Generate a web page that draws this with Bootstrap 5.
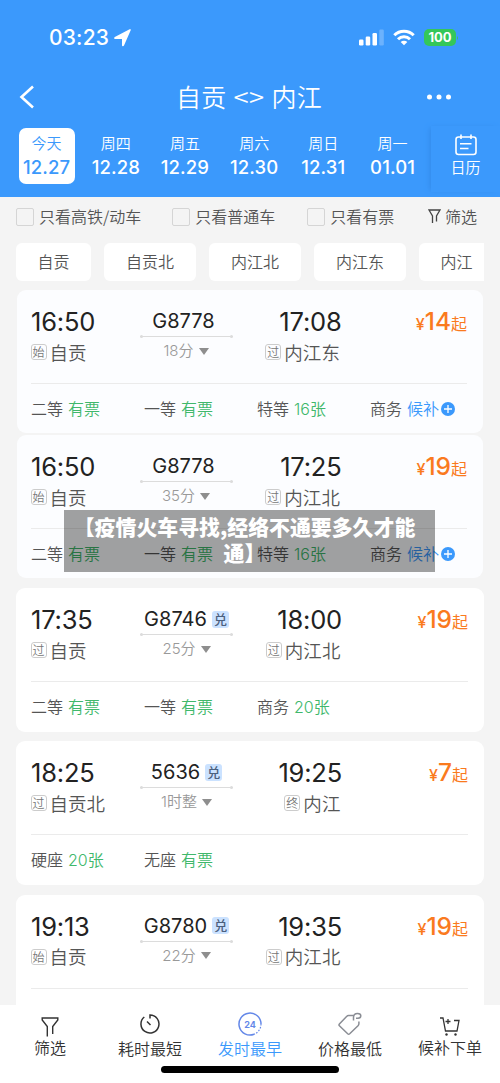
<!DOCTYPE html>
<html lang="zh-CN">
<head>
<meta charset="utf-8">
<meta name="viewport" content="width=device-width, initial-scale=1">
<title>自贡 - 内江</title>
<link href="https://cdn.jsdelivr.net/npm/bootstrap@5.3.0/dist/css/bootstrap.min.css" rel="stylesheet">
<style>
body{font-family:Inter,"Noto Sans CJK SC",sans-serif;background:#f4f4f4;color:#333;font-size:16px;line-height:1}
.zh{font-family:"Noto Sans CJK SC",sans-serif;font-weight:350}
.screen{width:500px;height:1083px}
.top-area{background:#3b99fc;height:197px}
.status{height:75px;padding:0 41px 0 49px}
.clock{font-size:21px;font-weight:500;letter-spacing:.2px}
.battery{background:#34c759;border-radius:5px;width:32px;height:17px;font-size:13px;font-weight:700;line-height:17px}
.title-row{height:44px;padding:0 48px 0 19px}
.title-text{font-size:25px;font-weight:350;letter-spacing:.3px;word-spacing:1.5px;line-height:32px;margin:-3px 0 0 37px}
.title-text b{font-weight:350;display:inline-block;transform:scaleX(1.1);margin:0 1px}
.dates{height:78px;padding:9px 0 0 12px}
.day{width:69.3px;height:56px}
.day-in{width:56px;height:56px;border-radius:7px;padding-top:6px}
.day-in.on{background:#fff;color:#3b99fc}
.day-name{font-size:15px;line-height:18px}
.day-num{font-size:18.5px;line-height:30px;font-weight:500;letter-spacing:.1px}
.cal{width:69px;height:66px;box-shadow:-3px 0 5px -2px #338ae8;font-size:15px;margin-top:-2px}
.filters{height:39px;padding:0 23px 0 16px;font-size:16px;color:#555}
.filters span:not(.box){margin-top:-2px}
.box{width:18px;height:18px;border:1px solid #d5d5d5;border-radius:2px;margin-right:5px}
.chips{height:38px;margin:7px 16px 9px;gap:13px}
.chip{flex:none;height:38px;line-height:36px;width:92px;background:#fff;border-radius:6px;font-size:16px;color:#555;text-align:center}
.trip{background:#fff;height:144px;border-radius:9px;margin:0 16px 9.4px;padding:0 16px 0 15px}
.trip.seen{background:#fcfdff;height:143px;margin:0 17px 2px;padding:0 16px 0 14px}
.trip-main{height:94px;border-bottom:1px solid #ebebeb;padding-top:16px}
.time{font-size:25.5px;line-height:31px;font-weight:400;letter-spacing:-.2px;color:#222}
.from{width:109px}.mid{width:93px}.to{width:109px}
.stn{font-size:18.5px;line-height:29px;height:31px;padding-bottom:1px;color:#555}
.from .stn{margin-left:-.5px}
.to .stn{padding-right:1.5px;letter-spacing:.1px}
.tag{width:16px;height:16px;border:1px solid #ccc;border-radius:3px;font-size:12px;line-height:13px;margin-right:3px;color:#777;text-align:center;letter-spacing:0}
.no{font-size:20px;line-height:30px;height:30px;font-weight:400;color:#222}
.rail{height:1px;background:#dcdcdc}
.rail::before,.rail::after{content:"";width:3px;height:3px;border-radius:50%;background:#dcdcdc;margin-top:-1px}
.dur{font-family:Inter,"Noto Sans CJK SC",sans-serif;font-size:15px;font-weight:350;line-height:28px;color:#999}
.tri{width:0;height:0;border:5px solid transparent;border-top:7px solid #8e8e8e;border-bottom:0;margin-left:5px}
.dui{width:17px;height:17px;border-radius:3px;background:#cbe2ff;color:#4b607e;font-size:13px;line-height:15px;margin-left:5px;font-weight:500;text-align:center}
.price{color:#fa7a1e;font-size:24.5px;line-height:31px;font-weight:450}
.price small{font-size:16px}
.price .zh{font-weight:400}
.seats{height:48px;font-size:16px;color:#555;word-spacing:1.4px}
.seats>div{width:113px;flex:none;white-space:nowrap}
.ok{color:#40b86b;font-family:Inter,"Noto Sans CJK SC",sans-serif}.wait{color:#3b99fc}
.caption-box{left:64px;top:510px;width:371px;height:62px;background:rgba(0,0,0,.37);color:#fff;font:900 20.9px/26px "Noto Sans CJK SC",sans-serif;padding:3px 10px 0 0;text-align:center}
.tabs{height:79px;margin-top:auto;background:#fff;z-index:2;color:#333;font-size:16px}
.tabs>div{width:100px;height:60px}
.tabs .zh{line-height:20px}
.home-bar{left:161px;bottom:10px;width:178px;height:7px;border-radius:4px;background:#000}
</style>
</head>
<body>
<div class="screen position-relative overflow-hidden d-flex flex-column">
<header class="top-area text-white flex-shrink-0">
  <div class="status d-flex align-items-center">
    <span class="clock">03:23</span>
    <svg class="ms-1" width="19" height="18" viewBox="0 0 19 18"><path d="M17.800 1.100 11 16.600c-.5 1-2 .8-2-.4V10H2.200c-1.200 0-1.400-1.500-.4-2L16.600.3c1-.4 1.600 0 1.200.8z" fill="#fff"/></svg>
    <svg class="ms-auto" width="25" height="17" viewBox="0 0 25 17" fill="#fff"><rect x="0" y="10.500" width="4.500" height="6" rx="1.200"/><rect x="6.700" y="7.500" width="4.500" height="9" rx="1.200"/><rect x="13.500" y="4" width="4.500" height="12.500" rx="1.200"/><rect x="20.300" y=".5" width="4.500" height="16" rx="1.200" opacity=".25"/></svg>
    <svg style="margin-left:9px" width="22" height="17" viewBox="0 0 22 17" fill="none" stroke="#fff" stroke-width="3"><path d="M1.300 6.200a13.700 13.700 0 0 1 19.400 0M5 10.200a8.500 8.500 0 0 1 12 0"/><path d="M11 16.200 7.700 13a4.700 4.700 0 0 1 6.600 0z" fill="#fff" stroke="none"/></svg>
    <span class="battery text-center" style="margin-left:9px">100</span>
    <svg width="3" height="6"><path d="M1 1v4q2-2 0-4" fill="#34c759"/></svg>
  </div>
  <div class="title-row d-flex align-items-center justify-content-between">
    <svg width="16" height="24" viewBox="0 0 16 24" fill="none" stroke="#fff" stroke-width="2.600"><path d="M14 1.500 2.500 12 14 22.500"/></svg>
    <span class="title-text zh">自贡 <b>&lt;&gt;</b> 内江</span>
    <svg width="26" height="6" fill="#fff"><circle cx="3.500" cy="3" r="2.500"/><circle cx="13" cy="3" r="2.500"/><circle cx="22.500" cy="3" r="2.500"/></svg>
  </div>
  <div class="dates d-flex text-center">
    <div class="day d-flex justify-content-center"><div class="day-in on"><div class="day-name zh">今天</div><div class="day-num">12.27</div></div></div>
    <div class="day d-flex justify-content-center"><div class="day-in"><div class="day-name zh">周四</div><div class="day-num">12.28</div></div></div>
    <div class="day d-flex justify-content-center"><div class="day-in"><div class="day-name zh">周五</div><div class="day-num">12.29</div></div></div>
    <div class="day d-flex justify-content-center"><div class="day-in"><div class="day-name zh">周六</div><div class="day-num">12.30</div></div></div>
    <div class="day d-flex justify-content-center"><div class="day-in"><div class="day-name zh">周日</div><div class="day-num">12.31</div></div></div>
    <div class="day d-flex justify-content-center"><div class="day-in"><div class="day-name zh">周一</div><div class="day-num">01.01</div></div></div>
    <div class="cal d-flex flex-column align-items-center pt-2 ms-1 zh">
      <svg width="22" height="22" viewBox="0 0 22 22" fill="none" stroke="#fff" stroke-width="1.600"><rect x="1" y="3" width="20" height="17.500" rx="2.500"/><path d="M6 .5v4.500M16 .5v4.500M5 9.700h11.500M5 14.500h8.500"/></svg>
      <span class="lh-1" style="margin-top:3px">日历</span>
    </div>
  </div>
</header>
<div class="filters zh d-flex align-items-center flex-shrink-0">
  <span class="box"></span><span>只看高铁/动车</span>
  <span class="box" style="margin-left:31px"></span><span>只看普通车</span>
  <span class="box" style="margin-left:32px"></span><span>只看有票</span>
  <svg class="ms-auto" width="13" height="15" viewBox="0 0 13 15" fill="none" stroke="#444" stroke-width="1.300"><path d="M4.500 14V7L1 1h11L8.500 7v5.500"/></svg><span class="ms-1">筛选</span>
</div>
<div class="chips zh d-flex overflow-hidden flex-shrink-0">
  <div class="chip" style="width:75px">自贡</div><div class="chip">自贡北</div><div class="chip">内江北</div><div class="chip">内江东</div><div class="chip" style="width:75px">内江</div>
</div>
<main class="flex-shrink-0">
  <section class="trip seen">
    <div class="trip-main d-flex">
      <div class="from"><div class="time">16:50</div><div class="stn zh d-flex align-items-center"><span class="tag">始</span>自贡</div></div>
      <div class="mid" style="margin-left:-.5px"><div class="no d-flex align-items-center justify-content-center" style="padding-right:5px">G8778</div><div class="rail d-flex justify-content-between"></div><div class="dur d-flex align-items-center justify-content-center">18分<i class="tri"></i></div></div>
      <div class="to"><div class="time text-end">17:08</div><div class="stn zh d-flex align-items-center justify-content-end"><span class="tag">过</span>内江东</div></div>
      <div class="price ms-auto"><small>¥</small>14<small class="zh">起</small></div>
    </div>
    <div class="seats zh d-flex align-items-center"><div>二等 <span class="ok">有票</span></div><div>一等 <span class="ok">有票</span></div><div>特等 <span class="ok">16张</span></div><div class="d-flex align-items-center">商务&nbsp;<span class="wait">候补</span><svg style="margin:1px 0 0 2px" width="14" height="14" viewBox="0 0 14 14"><circle cx="7" cy="7" r="7" fill="#3b99fc"/><path d="M3 7h8M7 3v8" stroke="#fff" stroke-width="1.300"/></svg></div></div>
  </section>
  <section class="trip seen" style="margin-bottom:10px">
    <div class="trip-main d-flex">
      <div class="from"><div class="time">16:50</div><div class="stn zh d-flex align-items-center"><span class="tag">始</span>自贡</div></div>
      <div class="mid" style="margin-left:-.5px"><div class="no d-flex align-items-center justify-content-center" style="padding-right:5px">G8778</div><div class="rail d-flex justify-content-between"></div><div class="dur d-flex align-items-center justify-content-center">35分<i class="tri"></i></div></div>
      <div class="to"><div class="time text-end">17:25</div><div class="stn zh d-flex align-items-center justify-content-end"><span class="tag">过</span>内江北</div></div>
      <div class="price ms-auto"><small>¥</small>19<small class="zh">起</small></div>
    </div>
    <div class="seats zh d-flex align-items-center"><div>二等 <span class="ok">有票</span></div><div>一等 <span class="ok">有票</span></div><div>特等 <span class="ok">16张</span></div><div class="d-flex align-items-center">商务&nbsp;<span class="wait">候补</span><svg style="margin:1px 0 0 2px;z-index:3" class="position-relative" width="14" height="14" viewBox="0 0 14 14"><circle cx="7" cy="7" r="7" fill="#3b99fc"/><path d="M3 7h8M7 3v8" stroke="#fff" stroke-width="1.300"/></svg></div></div>
  </section>
  <section class="trip">
    <div class="trip-main d-flex">
      <div class="from"><div class="time">17:35</div><div class="stn zh d-flex align-items-center"><span class="tag">过</span>自贡</div></div>
      <div class="mid"><div class="no d-flex align-items-center justify-content-center">G8746<span class="dui zh">兑</span></div><div class="rail d-flex justify-content-between"></div><div class="dur d-flex align-items-center justify-content-center">25分<i class="tri"></i></div></div>
      <div class="to"><div class="time text-end">18:00</div><div class="stn zh d-flex align-items-center justify-content-end"><span class="tag">过</span>内江北</div></div>
      <div class="price ms-auto"><small>¥</small>19<small class="zh">起</small></div>
    </div>
    <div class="seats zh d-flex align-items-center"><div>二等 <span class="ok">有票</span></div><div>一等 <span class="ok">有票</span></div><div>商务 <span class="ok">20张</span></div></div>
  </section>
  <section class="trip">
    <div class="trip-main d-flex">
      <div class="from"><div class="time">18:25</div><div class="stn zh d-flex align-items-center"><span class="tag">过</span>自贡北</div></div>
      <div class="mid"><div class="no d-flex align-items-center justify-content-center">5636<span class="dui zh">兑</span></div><div class="rail d-flex justify-content-between"></div><div class="dur d-flex align-items-center justify-content-center">1时整<i class="tri"></i></div></div>
      <div class="to"><div class="time text-end">19:25</div><div class="stn zh d-flex align-items-center justify-content-end"><span class="tag">终</span>内江</div></div>
      <div class="price ms-auto"><small>¥</small>7<small class="zh">起</small></div>
    </div>
    <div class="seats zh d-flex align-items-center"><div>硬座 <span class="ok">20张</span></div><div>无座 <span class="ok">有票</span></div></div>
  </section>
  <section class="trip mb-0" style="height:110px;border-radius:9px 9px 0 0">
    <div class="trip-main d-flex">
      <div class="from"><div class="time">19:13</div><div class="stn zh d-flex align-items-center"><span class="tag">始</span>自贡</div></div>
      <div class="mid"><div class="no d-flex align-items-center justify-content-center">G8780<span class="dui zh">兑</span></div><div class="rail d-flex justify-content-between"></div><div class="dur d-flex align-items-center justify-content-center">22分<i class="tri"></i></div></div>
      <div class="to"><div class="time text-end">19:35</div><div class="stn zh d-flex align-items-center justify-content-end"><span class="tag">过</span>内江北</div></div>
      <div class="price ms-auto"><small>¥</small>19<small class="zh">起</small></div>
    </div>
  </section>
</main>
<div class="caption-box position-absolute">【疫情火车寻找,经络不通要多久才能<br>通】</div>
<nav class="tabs d-flex flex-shrink-0 text-center">
  <div><svg class="d-block mx-auto" style="margin-top:12px" width="18" height="20" viewBox="0 0 18 20" fill="none" stroke="#333" stroke-width="1.400"><path d="M6.300 19.500V9.500L1.200 3V1h15.600v2l-5.100 6.500v7.500"/></svg><div class="zh">筛选</div></div>
  <div><svg class="d-block mx-auto" style="margin-top:9px" width="20" height="20" viewBox="0 0 20 20" fill="none" stroke="#333" stroke-width="1.500"><path d="M4.300 3A9 9 0 1 0 10 1v3.500M7 7.500l3.500 3.500"/></svg><div class="zh" style="margin-top:4px">耗时最短</div></div>
  <div class="wait"><svg class="d-block mx-auto" style="margin-top:7px" width="24" height="24" viewBox="0 0 24 24"><path d="M16 22.300A11 11 0 1 1 23 12" fill="none" stroke="#6488e8" stroke-width="1.500"/><path d="M23 12a11 11 0 0 1-7 10.300" fill="none" stroke="#6488e8" stroke-width="1.200" stroke-dasharray="1.500 1.500"/><text x="12" y="15.500" text-anchor="middle" font-family="Inter" font-size="9" font-weight="700" fill="#6488e8">24</text></svg><div class="zh" style="margin-top:2px">发时最早</div></div>
  <div><svg class="d-block mx-auto" style="margin-top:7px" width="24" height="24" viewBox="0 0 24 24" fill="none" stroke="#8a8d94" stroke-width="1.500"><path d="M15.500 3.500H10.500q-1 0-1.700.8L1.400 12q-.8 1 0 1.800l8.300 8q1 .9 2 0l8.300-8q.9-1 .9-2V9.500M15.500 8.500V5.500q0-4 4-4 3.300 0 3.300 2.300T20 6.300h-2"/></svg><div class="zh" style="margin-top:2px">价格最低</div></div>
  <div><svg class="d-block mx-auto" style="margin-top:12px" width="20" height="19" viewBox="0 0 20 19" fill="none" stroke="#333" stroke-width="1.300"><path d="M0 1h3l2.500 13h11.500L19 3.500h-5M5.500 4.500h5M8 2v5"/><circle cx="6.500" cy="17.500" r="1.200" fill="#333" stroke="none"/><circle cx="15.500" cy="17.500" r="1.200" fill="#333" stroke="none"/></svg><div class="zh" style="margin-top:1px">候补下单</div></div>
</nav>
<div class="home-bar position-absolute z-3"></div>
</div>
<script src="https://cdn.jsdelivr.net/npm/bootstrap@5.3.0/dist/js/bootstrap.bundle.min.js"></script>
</body>
</html>
